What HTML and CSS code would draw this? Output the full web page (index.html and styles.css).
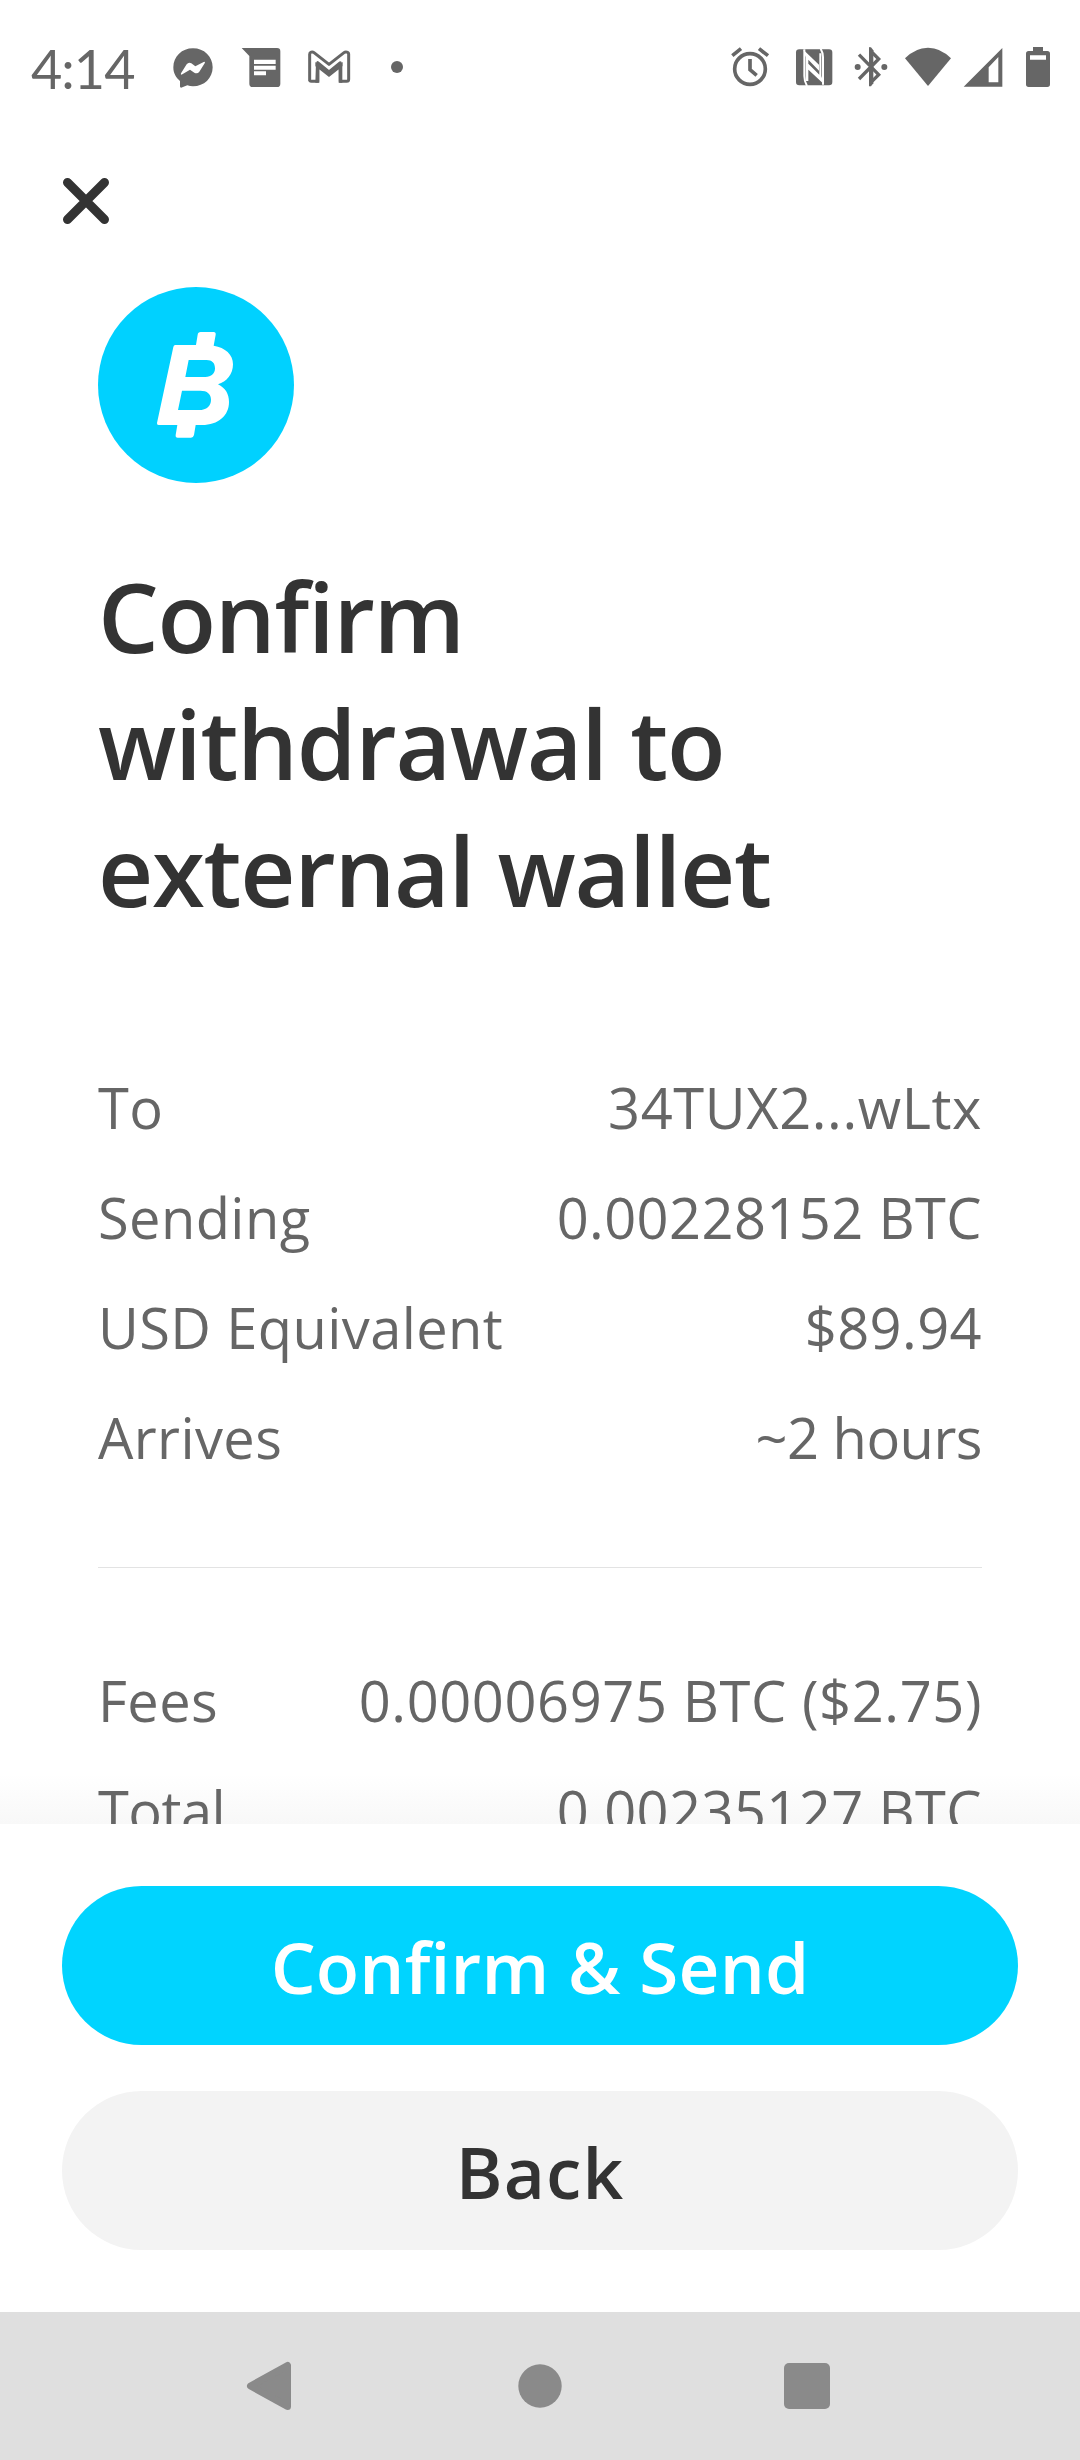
FILE: index.html
```html
<!DOCTYPE html>
<html lang="en">
<head>
    <meta charset="UTF-8">
    <meta name="viewport" content="width=device-width, initial-scale=1.0">
    <title>Confirm withdrawal</title>
    <link rel="stylesheet" href="styles.css">
</head>
<body>

    <div class="screen">
        <header class="status-bar">
            <span class="time">4:14</span>
            <div class="status-left">
                <!-- messenger -->
                <svg viewBox="513 72 132 138">
                    <path fill="#666" d="M579 85C546 85 520 109 520 142C520 160 528 173 540 183V199C540 203 543 204 547 202L562 196C567 198 573 199 579 199C612 199 638 175 638 142C638 109 612 85 579 85Z"/>
                    <path fill="#fff" d="M543 160L560 133Q566 125 574 130L586 139L611 126Q617 124 614 130L598 155Q592 163 583 158L570 149L547 163Q541 166 543 160Z"/>
                </svg>
                <!-- messages -->
                <svg viewBox="717 72 132 138">
                    <path fill="#666" d="M725 84H831Q841 84 841 94V191Q841 201 831 201H758Q748 201 748 191V108Z"/>
                    <path fill="#fff" d="M762 119H827V132H762ZM762 137H827V149H762ZM762 154H798V166H762Z"/>
                </svg>
                <!-- gmail -->
                <svg viewBox="921 72 132 138">
                    <path fill="none" stroke="#666" stroke-width="9" stroke-linejoin="round" d="M929 183V103C929 96 937 94 942 98L987 133L1032 98C1037 94 1046 96 1046 103V178Q1046 184 1040 184H1021V128L987 155.500L953 128V184H934Q928 184 929 178"/>
                    <path fill="#666" d="M948 127L958 142V188H946ZM1027 127L1016 142V188H1027ZM946 126L987 158V171L946 139ZM1028 126L987 158V171L1028 139Z"/>
                </svg>
                <svg viewBox="1125 72 132 138">
                    <circle cx="1191" cy="141" r="18" fill="#666"/>
                </svg>
            </div>
            <div class="status-right">
                <!-- alarm -->
                <svg class="alarm" viewBox="87 72 174 138">
                    <g fill="none" stroke="#666">
                        <circle cx="150" cy="147" r="46" stroke-width="11"/>
                        <path stroke-width="11" d="M97 107L123 86M177 86L204 107"/>
                        <path stroke-width="11" d="M150 117V149L170 166"/>
                    </g>
                </svg>
                <!-- nfc -->
                <svg viewBox="282 72 144 138">
                    <rect x="288" y="88" width="109" height="108" rx="10" fill="#666"/>
                    <path fill="none" stroke="#fff" stroke-width="6" d="M313 88V168Q313 184 321 198M369 194V112Q369 98 362 86"/>
                    <path fill="#fff" d="M310 89L357 134V152L325 119V183H317V112ZM372 193L322 146V128L358 164V100H364V168Z"/>
                </svg>
                <!-- bluetooth -->
                <svg viewBox="447 72 144 138">
                    <g fill="none" stroke="#666" stroke-width="10">
                        <path d="M477 104L536 164L513 187V94L536 117L477 177"/>
                    </g>
                    <path fill="#666" d="M507 82H513L520 91V190L513 199H507Z"/>
                    <circle cx="473" cy="141" r="9" fill="#666"/>
                    <circle cx="553" cy="141" r="9" fill="#666"/>
                </svg>
                <!-- wifi -->
                <svg viewBox="612 72 144 138">
                    <path fill="#666" d="M684 198L615 115Q646 83 684 83Q722 83 753 115Z"/>
                </svg>
                <!-- signal -->
                <svg viewBox="777 72 144 138">
                    <path fill="#666" fill-rule="evenodd" d="M791 200L907 84V200ZM866 142V187H895V111Z"/>
                </svg>
                <!-- battery -->
                <svg viewBox="942 72 144 138">
                    <path fill="#666" fill-rule="evenodd" d="M999 81H1029V93H1042Q1050 93 1050 101V193Q1050 201 1042 201H986Q978 201 978 193V101Q978 93 986 93H999ZM990 106V119H1038V106Z"/>
                </svg>
            </div>
        </header>

        <main class="content">
            <button class="close">
                <svg viewBox="0 0 46 46">
                    <path d="M4.500 4.500L41.500 41.500M41.500 4.500L4.500 41.500"/>
                </svg>
            </button>

            <div class="coin">
                <svg viewBox="54 51 588 588">
                    <path fill="#fff" fill-rule="evenodd" d="M286 225H348L353 194Q354 186 362 186H401Q408 186 407 194L401 227C436 233 459 253 459 283C459 313 440 335 414 343C436 354 447 371 447 396C447 437 415 465 366 465H347L342 495Q340 503 333 503H293Q286 503 287 495L292 465H236Q230 465 231 459L280 231Q281 225 286 225ZM326 270L316 321H376C394 321 405 311 405 295C405 279 396 270 380 270ZM306 362L294 420H357C380 420 393 408 393 389C393 372 382 362 361 362Z"/>
                </svg>
            </div>

            <h1>Confirm<br>withdrawal to<br>external wallet</h1>

            <div class="details">
                <div class="row"><span>To</span><span class="wide">34TUX2...wLtx</span></div>
                <div class="row"><span>Sending</span><span>0.00228152 BTC</span></div>
                <div class="row"><span>USD Equivalent</span><span>$89.94</span></div>
                <div class="row"><span>Arrives</span><span class="narrow">~2 hours</span></div>
            </div>

            <div class="details totals">
                <div class="row"><span>Fees</span><span class="wide">0.00006975 BTC ($2.75)</span></div>
                <div class="row"><span class="narrow">Total</span><span>0.00235127 BTC</span></div>
            </div>
        </main>

        <footer class="actions">
            <button class="btn confirm">Confirm &amp; Send</button>
            <button class="btn back">Back</button>
        </footer>

        <nav class="nav-bar">
            <svg viewBox="0 0 50 50">
                <path d="M2.500 25L39.500 4.500V45.500Z" stroke="#8a8a8a" stroke-width="7" stroke-linejoin="round"/>
            </svg>
            <svg viewBox="0 0 50 50">
                <circle cx="25" cy="25" r="21.700"/>
            </svg>
            <svg viewBox="0 0 50 50">
                <rect x="2" y="2" width="46" height="46" rx="5"/>
            </svg>
        </nav>
    </div>

</body>
</html>
```
FILE: styles.css
```css
* {
    margin: 0;
    padding: 0;
    box-sizing: border-box;
}

body {
    font-family: "Open Sans", "Noto Sans", sans-serif;
    background-color: #fff;
    color: #333;
}

svg {
    display: block;
    overflow: visible;
}

button {
    border: none;
    background: none;
    font-family: inherit;
    cursor: pointer;
}

.screen {
    width: 1080px;
    height: 2460px;
    display: flex;
    flex-direction: column;
    overflow: hidden;
}

/* status bar */
.status-bar {
    height: 134px;
    padding: 0 18px 0 31px;
    display: flex;
    align-items: center;
    color: #666;
}

.time {
    width: 140px;
    padding-top: 4px;
    font-family: Lato, sans-serif;
    font-size: 54px;
    line-height: 60px;
    letter-spacing: -1px;
    white-space: nowrap;
}

.status-left,
.status-right {
    display: flex;
}

.status-left {
    gap: 24px;
}

.status-right {
    gap: 7px;
    margin-left: auto;
}

.status-left svg {
    width: 44px;
    height: 46px;
}

.status-right svg {
    width: 48px;
    height: 46px;
}

.status-right .alarm {
    width: 58px;
}

/* content */
.content {
    flex: 1;
    min-height: 0;
    padding: 44px 98px 0;
    overflow: hidden;
    background: linear-gradient(to top, #f8f8f8, #fff 50px);
}

.close {
    display: block;
    width: 46px;
    height: 46px;
    margin-left: -35px;
}

.close svg {
    fill: none;
    stroke: #333;
    stroke-width: 9;
    stroke-linecap: round;
}

.coin {
    width: 196px;
    height: 196px;
    margin-top: 63px;
    border-radius: 50%;
    background-color: #00d1ff;
}

h1 {
    margin-top: 69px;
    font-size: 96px;
    font-weight: 600;
    line-height: 127px;
    letter-spacing: -1.3px;
    white-space: nowrap;
}

.details {
    margin-top: 119px;
    color: #666;
    font-size: 56px;
    line-height: 110px;
    letter-spacing: 0.4px;
}

.totals {
    margin-top: 75px;
    padding-top: 77px;
    border-top: 1px solid #e3e3e3;
}

.row {
    display: flex;
    justify-content: space-between;
    white-space: nowrap;
}

.wide {
    letter-spacing: 0.6px;
}

.narrow {
    letter-spacing: -0.5px;
}

/* buttons */
.actions {
    display: flex;
    flex-direction: column;
    gap: 46px;
    padding: 62px;
}

.btn {
    height: 159px;
    padding-top: 2px;
    border-radius: 80px;
    font-size: 71px;
    font-weight: 600;
    line-height: 157px;
}

.confirm {
    background-color: #00d4ff;
    color: #fff;
    letter-spacing: 0.2px;
}

.back {
    background-color: #f3f3f3;
    color: #333;
    letter-spacing: 1.2px;
}

/* navigation */
.nav-bar {
    height: 148px;
    padding: 0 248px;
    display: flex;
    align-items: center;
    justify-content: space-between;
    background-color: #dfdfdf;
}

.nav-bar svg {
    width: 50px;
    height: 50px;
    fill: #8a8a8a;
}
```
